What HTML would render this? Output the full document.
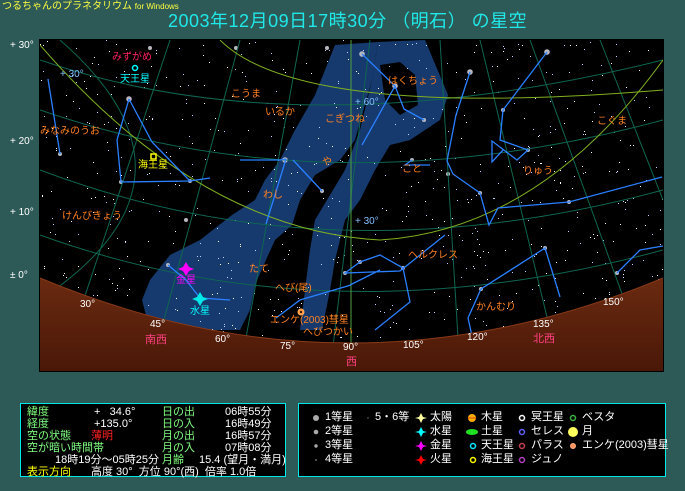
<!DOCTYPE html>
<html><head><meta charset="utf-8">
<style>
html,body{margin:0;padding:0;}
body{width:685px;height:491px;overflow:hidden;background:#2d5a57;font-family:"Liberation Sans","Noto Sans CJK JP",sans-serif;position:relative;}
.a{position:absolute;white-space:nowrap;line-height:1;}
svg{position:absolute;left:0;top:0;}
.box{position:absolute;border:1px solid #00e8e8;background:#000;}
.t{position:absolute;white-space:nowrap;font-size:11px;line-height:1;}
</style></head><body>
<div class="a" style="left:2px;top:2px;font-size:10px;color:#ffff40;">つるちゃんのプラネタリウム <span style="font-size:8px">for Windows</span></div>
<div class="a" style="left:168px;top:12px;font-size:18px;color:#20e8e8;letter-spacing:0.5px;">2003年12月09日17時30分 （明石） の星空</div>
<div class="a" style="left:10px;top:41px;font-size:10px;color:#fff;">+ 30°</div>
<div class="a" style="left:10px;top:137px;font-size:10px;color:#fff;">+ 20°</div>
<div class="a" style="left:10px;top:208px;font-size:10px;color:#fff;">+ 10°</div>
<div class="a" style="left:10px;top:271px;font-size:10px;color:#fff;">± 0°</div>

<svg width="685" height="491" viewBox="0 0 685 491">
<defs>
<clipPath id="m"><rect x="40" y="40" width="623" height="331"/></clipPath>
<linearGradient id="g" x1="0" y1="0" x2="0" y2="1"><stop offset="0" stop-color="#6a2a10"/><stop offset="1" stop-color="#4a1808"/></linearGradient>
</defs>
<rect x="40" y="40" width="623" height="331" fill="#000"/>
<g clip-path="url(#m)">
<path d="M335,45 L378,42 L372,80 L355,140 L340,160 L315,175 L300,200 L292,225 L275,240 L265,262 L255,285 L250,310 L240,330 L150,330 L142,300 L150,280 L170,255 L200,240 L232,215 L255,200 L265,180 L280,160 L295,130 L315,95 Z" fill="#163a6e"/>
<path d="M378,42 L425,40 L448,95 L440,120 L410,140 L390,145 L375,170 L360,200 L345,220 L335,260 L330,290 L322,330 L300,330 L305,290 L310,250 L315,220 L330,195 L345,170 L360,130 L372,80 Z" fill="#163a6e"/>
<path d="M380,65 L400,62 L415,75 L418,105 L400,115 L385,100 Z" fill="#000"/>
<g id="stars"></g>
<g fill="none" stroke="#0e6650" stroke-width="1">
<path d="M40,60 Q300,150 663,60"/><path d="M40,110 Q330,210 663,120"/><path d="M40,170 Q330,280 663,190"/><path d="M40,235 Q330,340 663,250"/>
<path d="M170,40 L60,371"/><path d="M240,40 L150,371"/><path d="M300,40 L240,371"/><path d="M370,40 L330,371"/><path d="M440,40 L460,371"/><path d="M480,40 L560,371"/><path d="M530,40 L650,371"/><path d="M600,40 L663,200"/>
<path d="M60,40 Q220,180 40,300"/>
</g>
<path d="M40,45 Q200,230 380,240 Q540,230 663,60" fill="none" stroke="#80b020" stroke-width="1"/>
<path d="M220,40 Q300,120 663,90" fill="none" stroke="#80b020" stroke-width="1"/>
<line x1="351" y1="40" x2="351" y2="371" stroke="#50a040"/>
<g fill="none" stroke="#2a80ff" stroke-width="1.3">
<path d="M129,99 L117,140 L121,182 L190,181 L152,142 L129,99"/>
<path d="M190,181 L210,178"/><path d="M48,79 L60,154"/>
<path d="M286,159 L280,160 L240,160"/><path d="M286,159 L266,224"/><path d="M293,160 L322,191"/>
<path d="M362,54 L395,86 L404,109 L424,120"/><path d="M395,86 L362,145"/>
<path d="M412,160 L405,165 L430,165"/>
<path d="M470,72 L456,115 L447,161 L453,174 L480,193 L489,225 L498,208 L569,202 L662,177"/>
<path d="M547,52 L503,110 L500,140 L528,150 L517,160 L492,141 L492,162 L503,150"/>
<path d="M403,268 L380,255 L360,262 L345,273 L400,271 L445,235"/><path d="M403,268 L410,302 L375,330"/>
<path d="M468,318 L481,289 L545,248 L560,297"/><path d="M468,318 L474,345"/>
<path d="M617,273 L640,250 L663,246"/>
<path d="M350,285 L380,270"/><path d="M276,318 L300,300 L351,285"/>
<path d="M168,265 L186,280 L200,298 L230,300"/>
</g>
<path d="M40,278 Q350,408 663,278 L663,371 L40,371 Z" fill="url(#g)"/>
<path d="M40,278 Q350,408 663,278" fill="none" stroke="#8a3a18" stroke-width="1"/>
</g>
<rect x="39.5" y="39.5" width="624" height="332" fill="none" stroke="#000"/>
<circle cx="135" cy="68" r="2.5" fill="none" stroke="#00ffff" stroke-width="1.5"/>
<rect x="151" y="154" width="5" height="5" fill="none" stroke="#ffff00" stroke-width="1.5"/>
<path d="M186,262 L189,267 L194,269 L189,271 L186,276 L183,271 L178,269 L183,267Z" fill="#ff00ff"/>
<path d="M200,292 L203,297 L208,299 L203,301 L200,306 L197,301 L192,299 L197,297Z" fill="#00e8e8"/>
<circle cx="301" cy="312" r="3" fill="#ff9040" stroke="#ffb060"/>
<circle cx="301" cy="312" r="1" fill="#000"/>
</svg>

<div class="a" style="left:112px;top:53px;font-size:10px;color:#ff2060;">みずがめ</div>
<div class="a" style="left:120px;top:75px;font-size:10px;color:#00ffff;">天王星</div>
<div class="a" style="left:60px;top:70px;font-size:10px;color:#80c0ff;">+ 30°</div>
<div class="a" style="left:40px;top:127px;font-size:10px;color:#ff8020;">みなみのうお</div>
<div class="a" style="left:231px;top:90px;font-size:10px;color:#ff8020;">こうま</div>
<div class="a" style="left:265px;top:108px;font-size:10px;color:#ff8020;">いるか</div>
<div class="a" style="left:325px;top:115px;font-size:10px;color:#ff8020;">こぎつね</div>
<div class="a" style="left:388px;top:77px;font-size:10px;color:#ff8020;">はくちょう</div>
<div class="a" style="left:355px;top:98px;font-size:10px;color:#80c0ff;">+ 60°</div>
<div class="a" style="left:322px;top:158px;font-size:10px;color:#ff8020;">や</div>
<div class="a" style="left:402px;top:165px;font-size:10px;color:#ff8020;">こと</div>
<div class="a" style="left:263px;top:191px;font-size:10px;color:#ff8020;">わし</div>
<div class="a" style="left:138px;top:161px;font-size:10px;color:#ffff00;">海王星</div>
<div class="a" style="left:62px;top:212px;font-size:10px;color:#ff8020;">けんびきょう</div>
<div class="a" style="left:355px;top:217px;font-size:10px;color:#80c0ff;">+ 30°</div>
<div class="a" style="left:408px;top:251px;font-size:10px;color:#ff8020;">ヘルクレス</div>
<div class="a" style="left:249px;top:265px;font-size:10px;color:#ff8020;">たて</div>
<div class="a" style="left:275px;top:284px;font-size:10px;color:#ff8020;">へび(尾)</div>
<div class="a" style="left:270px;top:316px;font-size:10px;color:#ff8020;">エンケ(2003)彗星</div>
<div class="a" style="left:303px;top:328px;font-size:10px;color:#ff8020;">へびつかい</div>
<div class="a" style="left:476px;top:303px;font-size:10px;color:#ff8020;">かんむり</div>
<div class="a" style="left:523px;top:167px;font-size:10px;color:#ff8020;">りゅう</div>
<div class="a" style="left:597px;top:117px;font-size:10px;color:#ff8020;">こぐま</div>
<div class="a" style="left:176px;top:276px;font-size:10px;color:#ff00ff;">金星</div>
<div class="a" style="left:190px;top:307px;font-size:10px;color:#00ffff;">水星</div>
<div class="a" style="left:80px;top:300px;font-size:10px;color:#fff;">30°</div>
<div class="a" style="left:150px;top:320px;font-size:10px;color:#fff;">45°</div>
<div class="a" style="left:145px;top:335px;font-size:11px;color:#ff4080;">南西</div>
<div class="a" style="left:215px;top:335px;font-size:10px;color:#fff;">60°</div>
<div class="a" style="left:280px;top:342px;font-size:10px;color:#fff;">75°</div>
<div class="a" style="left:343px;top:343px;font-size:10px;color:#fff;">90°</div>
<div class="a" style="left:346px;top:357px;font-size:11px;color:#ff4080;">西</div>
<div class="a" style="left:403px;top:341px;font-size:10px;color:#fff;">105°</div>
<div class="a" style="left:467px;top:333px;font-size:10px;color:#fff;">120°</div>
<div class="a" style="left:533px;top:320px;font-size:10px;color:#fff;">135°</div>
<div class="a" style="left:533px;top:334px;font-size:11px;color:#ff4080;">北西</div>
<div class="a" style="left:603px;top:298px;font-size:10px;color:#fff;">150°</div>

<div class="box" style="left:20px;top:403px;width:264px;height:72px;">
<div class="t" style="left:6px;top:3px;color:#80ff80;">緯度</div><div class="t" style="left:73px;top:3px;color:#fff;">+&nbsp;&nbsp;&nbsp;34.6°</div>
<div class="t" style="left:141px;top:3px;color:#80ff80;">日の出</div><div class="t" style="left:204px;top:3px;color:#fff;">06時55分</div>
<div class="t" style="left:6px;top:15px;color:#80ff80;">経度</div><div class="t" style="left:73px;top:15px;color:#fff;">+135.0°</div>
<div class="t" style="left:141px;top:15px;color:#80ff80;">日の入</div><div class="t" style="left:204px;top:15px;color:#fff;">16時49分</div>
<div class="t" style="left:6px;top:27px;color:#80ff80;">空の状態</div><div class="t" style="left:70px;top:27px;color:#ff2020;">薄明</div>
<div class="t" style="left:141px;top:27px;color:#80ff80;">月の出</div><div class="t" style="left:204px;top:27px;color:#fff;">16時57分</div>
<div class="t" style="left:6px;top:39px;color:#80ff80;">空が暗い時間帯</div>
<div class="t" style="left:141px;top:39px;color:#80ff80;">月の入</div><div class="t" style="left:204px;top:39px;color:#fff;">07時08分</div>
<div class="t" style="left:34px;top:51px;color:#fff;">18時19分～05時25分</div>
<div class="t" style="left:141px;top:51px;color:#80ff80;">月齢</div><div class="t" style="left:178px;top:51px;color:#fff;">15.4 (望月・満月)</div>
<div class="t" style="left:6px;top:63px;color:#ffff00;">表示方向</div><div class="t" style="left:70px;top:63px;color:#fff;">高度 30°&nbsp; 方位 90°(西)&nbsp; 倍率 1.0倍</div>
</div>

<div class="box" style="left:298px;top:403px;width:366px;height:72px;">
<svg width="366" height="72" style="left:0;top:0">
<circle cx="17" cy="14" r="3" fill="#aaa"/><circle cx="17" cy="28" r="2.3" fill="#aaa"/><circle cx="17" cy="42" r="1.7" fill="#aaa"/><circle cx="17" cy="56" r="0.8" fill="#aaa"/>
<circle cx="69" cy="14" r="0.6" fill="#aaa"/>
<path d="M122,9 L124,13 L128,14 L124,15 L122,19 L120,15 L116,14 L120,13Z" fill="#ffffa0"/>
<path d="M122,23 L124,27 L128,28 L124,29 L122,33 L120,29 L116,28 L120,27Z" fill="#00ffff"/>
<path d="M122,37 L124,41 L128,42 L124,43 L122,47 L120,43 L116,42 L120,41Z" fill="#ff00ff"/>
<path d="M122,51 L124,55 L128,56 L124,57 L122,61 L120,57 L116,56 L120,55Z" fill="#ff0000"/>
<circle cx="173" cy="14" r="4" fill="#ffb000"/><line x1="169" y1="14" x2="177" y2="14" stroke="#e04000"/>
<ellipse cx="173" cy="28" rx="6" ry="3" fill="#20e020"/>
<circle cx="174" cy="42" r="2.5" fill="none" stroke="#00e8ff" stroke-width="1.5"/>
<circle cx="174" cy="56" r="2.5" fill="none" stroke="#ffff00" stroke-width="1.5"/>
<circle cx="223" cy="14" r="2.5" fill="none" stroke="#fff" stroke-width="1.5"/>
<circle cx="223" cy="28" r="2.5" fill="none" stroke="#6060ff" stroke-width="1.5"/>
<circle cx="223" cy="42" r="2.5" fill="none" stroke="#c04050" stroke-width="1.5"/>
<circle cx="223" cy="56" r="2.5" fill="none" stroke="#b040c0" stroke-width="1.5"/>
<circle cx="274" cy="14" r="2.5" fill="none" stroke="#40b040" stroke-width="1.5"/>
<circle cx="274" cy="28" r="5" fill="#ffff60"/>
<circle cx="274" cy="42" r="2.5" fill="#ff9060" stroke="#ffb080"/>
</svg>
<div class="t" style="left:26px;top:8px;color:#fff;">1等星</div><div class="t" style="left:26px;top:22px;color:#fff;">2等星</div><div class="t" style="left:26px;top:36px;color:#fff;">3等星</div><div class="t" style="left:26px;top:50px;color:#fff;">4等星</div>
<div class="t" style="left:76px;top:8px;color:#fff;">5・6等</div>
<div class="t" style="left:131px;top:8px;color:#fff;">太陽</div><div class="t" style="left:131px;top:22px;color:#fff;">水星</div><div class="t" style="left:131px;top:36px;color:#fff;">金星</div><div class="t" style="left:131px;top:50px;color:#fff;">火星</div>
<div class="t" style="left:182px;top:8px;color:#fff;">木星</div><div class="t" style="left:182px;top:22px;color:#fff;">土星</div><div class="t" style="left:182px;top:36px;color:#fff;">天王星</div><div class="t" style="left:182px;top:50px;color:#fff;">海王星</div>
<div class="t" style="left:232px;top:8px;color:#fff;">冥王星</div><div class="t" style="left:232px;top:22px;color:#fff;">セレス</div><div class="t" style="left:232px;top:36px;color:#fff;">パラス</div><div class="t" style="left:232px;top:50px;color:#fff;">ジュノ</div>
<div class="t" style="left:283px;top:8px;color:#fff;">ベスタ</div><div class="t" style="left:283px;top:22px;color:#fff;">月</div><div class="t" style="left:283px;top:36px;color:#fff;">エンケ(2003)彗星</div>
</div>

<script>
(function(){
var s=12345;function r(){s=(s*1103515245+12345)%2147483648;return s/2147483648;}
var g=document.getElementById('stars'),h='';
for(var i=0;i<700;i++){var x=40+r()*623,y=40+r()*300;var c=r();
h+='<rect x="'+x.toFixed(0)+'" y="'+y.toFixed(0)+'" width="1" height="1" fill="'+(c<.5?'#ffffff':'#c0d0ff')+'"/>';}
var big=[[362,54],[395,86],[470,72],[547,52],[285,160],[129,99],[412,160],[448,174],[322,191],[617,273],[481,289],[545,248],[403,268],[360,262],[345,273],[186,220],[60,154],[121,182],[190,181],[424,120],[150,48],[236,48],[327,48],[503,110],[528,150],[480,193],[569,202],[168,265]];
for(var j=0;j<big.length;j++){h+='<circle cx="'+big[j][0]+'" cy="'+big[j][1]+'" r="'+(j<6?2.8:2)+'" fill="#b8b8c0"/>';}
g.innerHTML=h;
})();
</script>
</body></html>
